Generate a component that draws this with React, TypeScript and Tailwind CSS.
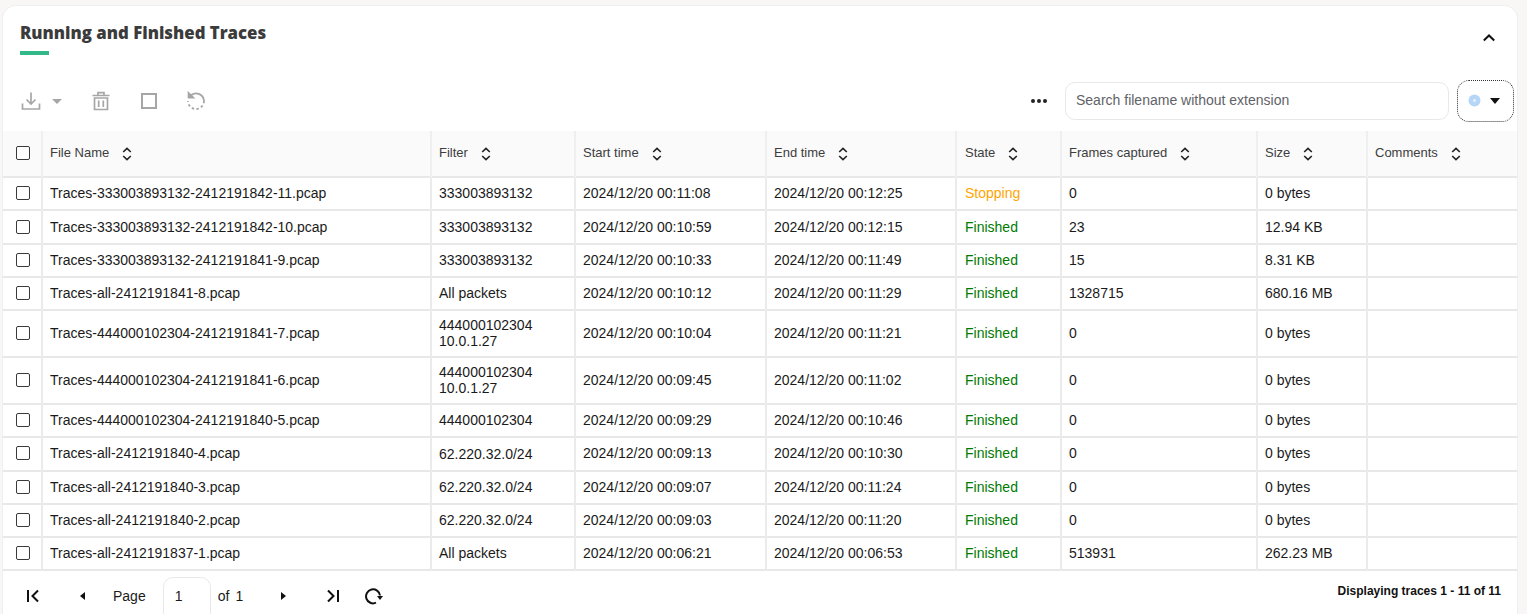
import React from "react";

const rows: [string, string[], string, string, string, string, string, number][] = [
  ["Traces-333003893132-2412191842-11.pcap", ["333003893132"], "2024/12/20 00:11:08", "2024/12/20 00:12:25", "Stopping", "0", "0 bytes", 33],
  ["Traces-333003893132-2412191842-10.pcap", ["333003893132"], "2024/12/20 00:10:59", "2024/12/20 00:12:15", "Finished", "23", "12.94 KB", 34],
  ["Traces-333003893132-2412191841-9.pcap", ["333003893132"], "2024/12/20 00:10:33", "2024/12/20 00:11:49", "Finished", "15", "8.31 KB", 33],
  ["Traces-all-2412191841-8.pcap", ["All packets"], "2024/12/20 00:10:12", "2024/12/20 00:11:29", "Finished", "1328715", "680.16 MB", 33],
  ["Traces-444000102304-2412191841-7.pcap", ["444000102304", "10.0.1.27"], "2024/12/20 00:10:04", "2024/12/20 00:11:21", "Finished", "0", "0 bytes", 47],
  ["Traces-444000102304-2412191841-6.pcap", ["444000102304", "10.0.1.27"], "2024/12/20 00:09:45", "2024/12/20 00:11:02", "Finished", "0", "0 bytes", 47],
  ["Traces-444000102304-2412191840-5.pcap", ["444000102304"], "2024/12/20 00:09:29", "2024/12/20 00:10:46", "Finished", "0", "0 bytes", 33],
  ["Traces-all-2412191840-4.pcap", ["62.220.32.0/24"], "2024/12/20 00:09:13", "2024/12/20 00:10:30", "Finished", "0", "0 bytes", 34],
  ["Traces-all-2412191840-3.pcap", ["62.220.32.0/24"], "2024/12/20 00:09:07", "2024/12/20 00:11:24", "Finished", "0", "0 bytes", 33],
  ["Traces-all-2412191840-2.pcap", ["62.220.32.0/24"], "2024/12/20 00:09:03", "2024/12/20 00:11:20", "Finished", "0", "0 bytes", 33],
  ["Traces-all-2412191837-1.pcap", ["All packets"], "2024/12/20 00:06:21", "2024/12/20 00:06:53", "Finished", "513931", "262.23 MB", 33],
];

const widths = [39, 389, 144, 191, 190, 105, 196, 110, 150];
const heads = ["File Name", "Filter", "Start time", "End time", "State", "Frames captured", "Size", "Comments"];

function Sort() {
  return (
    <svg width="10" height="14" viewBox="0 0 10 14" fill="none" stroke="#222" strokeWidth="1.6" className="ml-[13px] mt-[1px] shrink-0">
      <path d="M1.2 5 5 1.4 8.8 5M1.2 9 5 12.6 8.8 9" />
    </svg>
  );
}

function Check() {
  return <span className="mb-[1px] block h-[14px] w-[14px] rounded-[2px] border-[1.5px] border-[#3a3a3a] bg-white" />;
}

export default function App() {
  return (
    <div className="h-[614px] overflow-hidden bg-[#f8f7f5] pl-[2px] pt-[5px] font-['Liberation_Sans',Arial,sans-serif] text-[14px] text-[#1a1a1a]">
      <div className="h-[640px] w-[1516px] rounded-t-[14px] border-l border-r border-t border-[#efefef] bg-white">
        <div className="flex h-[64px] items-start justify-between pl-[17px] pr-[20px]">
          <div className="pt-[16px]">
            <h2 className="font-['Open_Sans',sans-serif] text-[16.8px] font-extrabold leading-[22px] text-[#3b3b3b]">Running and Finished Traces</h2>
            <div className="mt-[7px] h-[4px] w-[29px] bg-[#33b88a]" />
          </div>
          <svg width="16" height="16" viewBox="0 0 16 16" fill="none" stroke="#111" strokeWidth="2" className="mt-[24px]">
            <path d="M2.8 10.5 8 5.5l5.2 5" />
          </svg>
        </div>
        <div className="flex h-[61px] items-center justify-between pr-[3px]">
          <div className="flex items-center pl-[18px] pt-[1px]">
            <svg width="20" height="20" viewBox="0 0 20 20" fill="none" stroke="#a6a6a6" strokeWidth="1.7">
              <path d="M10 1.5v11M5.5 8.5 10 13l4.5-4.5M1.5 12.5v5.5h17v-5.5" />
            </svg>
            <span className="ml-[11px] h-0 w-0 border-l-[5px] border-r-[5px] border-t-[5px] border-l-transparent border-r-transparent border-t-[#a6a6a6]" />
            <svg width="20" height="20" viewBox="0 0 20 20" fill="none" stroke="#a6a6a6" strokeWidth="1.7" className="ml-[29px]">
              <path d="M1.5 4.5h17M7 4.5V1.7h6v2.8M3.5 7h13v11.5h-13zM7.7 9.5v6.5M12.3 9.5v6.5" />
            </svg>
            <span className="ml-[30px] h-[16px] w-[16px] border-2 border-[#a6a6a6]" />
            <svg width="20" height="20" viewBox="0 0 20 20" fill="none" stroke="#a6a6a6" strokeWidth="1.8" className="ml-[29px]">
              <path d="M2.6 2v4.6h4.6z" fill="#a6a6a6" />
              <path d="M5 4.2A8 8 0 0 1 18 10" />
              <path d="M18 10a8 8 0 0 1-16 0" strokeDasharray="2.4 2.4" />
            </svg>
          </div>
          <div className="flex items-center">
            <span className="flex gap-[2px]">
              <i className="h-[4px] w-[4px] rounded-full bg-[#222]" />
              <i className="h-[4px] w-[4px] rounded-full bg-[#222]" />
              <i className="h-[4px] w-[4px] rounded-full bg-[#222]" />
            </span>
            <input
              readOnly
              placeholder="Search filename without extension"
              className="ml-[18px] h-[38px] w-[384px] rounded-[10px] border border-[#e8e8e8] bg-white px-[10px] pb-[2px] text-[14px] outline-none placeholder:text-[#5f6368]"
            />
            <div className="ml-[8px] flex h-[42px] w-[57px] items-center justify-center gap-[9px] rounded-[12px] border border-dotted border-[#333] pr-[4px]">
              <svg width="13" height="13" viewBox="0 0 13 13">
                <circle cx="6.5" cy="6.5" r="6" fill="#b5d6f6" />
                <circle cx="6.5" cy="6.5" r="1.4" fill="#e6f2fd" />
              </svg>
              <span className="h-0 w-0 border-l-[5px] border-r-[5px] border-t-[6px] border-l-transparent border-r-transparent border-t-[#111]" />
            </div>
          </div>
        </div>
        <table className="w-[1514px] table-fixed border-collapse">
          <colgroup>
            {widths.map((w, i) => <col key={i} style={{ width: w }} />)}
          </colgroup>
          <thead>
            <tr className="h-[46px] border-b-2 border-[#e8e8e8] bg-[#fafafa]">
              <th className="border-r-2 border-[#efefef] pl-[13px] font-normal"><Check /></th>
              {heads.map((h, i) => (
                <th key={h} className={`text-left text-[13px] font-normal text-[#3d3d3d] ${i === 4 ? "pl-[8px] pr-[7px]" : "px-[7px]"} ${i < 7 ? "border-r-2 border-[#efefef]" : ""}`}>
                  <div className="flex items-center">
                    <span className="pb-[2px]">{h}</span>
                    <Sort />
                  </div>
                </th>
              ))}
            </tr>
          </thead>
          <tbody>
            {rows.map((r, i) => (
              <tr key={r[0]} style={{ height: r[7] }} className={`border-b-2 border-[#e8e8e8] ${i === 7 ? "[&>td]:pb-[1px]" : ""}`}>
                <td className="border-r-2 border-[#ebebeb] pl-[13px]"><Check /></td>
                <td className="border-r-2 border-[#ebebeb] px-[7px]">{r[0]}</td>
                <td className={`border-r-2 border-[#ebebeb] px-[7px] leading-[16px] ${i === 1 ? "" : "pb-[2px]"}`}>
                  {r[1].map((l) => <div key={l}>{l}</div>)}
                </td>
                <td className="border-r-2 border-[#ebebeb] px-[7px]">{r[2]}</td>
                <td className="border-r-2 border-[#ebebeb] px-[7px]">{r[3]}</td>
                <td className={`border-r-2 border-[#ebebeb] pl-[8px] pr-[7px] ${r[4] === "Stopping" ? "text-[#ffa500]" : "text-[#007a00]"}`}>{r[4]}</td>
                <td className="border-r-2 border-[#ebebeb] px-[7px]">{r[5]}</td>
                <td className="border-r-2 border-[#ebebeb] px-[7px]">{r[6]}</td>
                <td />
              </tr>
            ))}
          </tbody>
        </table>
        <div className="flex h-[50px] items-start justify-between pr-[16px]">
          <div className="flex items-center pl-[23px] pt-[6px]">
            <svg width="14" height="14" viewBox="0 0 14 14" fill="none" stroke="#111" strokeWidth="2"><path d="M2 1v12M12 1.5 6.5 7l5.5 5.5" /></svg>
            <span className="ml-[40px] h-0 w-0 border-b-[4px] border-r-[5px] border-t-[4px] border-b-transparent border-r-[#111] border-t-transparent" />
            <span className="ml-[28px]">Page</span>
            <span className="ml-[17px] flex h-[38px] w-[48px] items-center rounded-t-[10px] border border-[#e8e8e8] pl-[11px]">1</span>
            <span className="ml-[7px]">of</span>
            <span className="ml-[6px]">1</span>
            <span className="ml-[38px] h-0 w-0 border-b-[4px] border-l-[5px] border-t-[4px] border-b-transparent border-l-[#111] border-t-transparent" />
            <svg width="14" height="14" viewBox="0 0 14 14" fill="none" stroke="#111" strokeWidth="2" className="ml-[40px]"><path d="M12 1v12M2 1.5 7.5 7 2 12.5" /></svg>
            <svg width="18" height="18" viewBox="0 0 18 18" fill="none" stroke="#111" strokeWidth="2" className="ml-[25px]">
              <path d="M11 15.7A7 7 0 1 1 15 8.5" />
              <path d="M12 9h6l-3 4z" fill="#111" stroke="none" />
            </svg>
          </div>
          <div className="pt-[11px] text-[12px] font-bold text-[#111]">Displaying traces 1 - 11 of 11</div>
        </div>
      </div>
    </div>
  );
}
